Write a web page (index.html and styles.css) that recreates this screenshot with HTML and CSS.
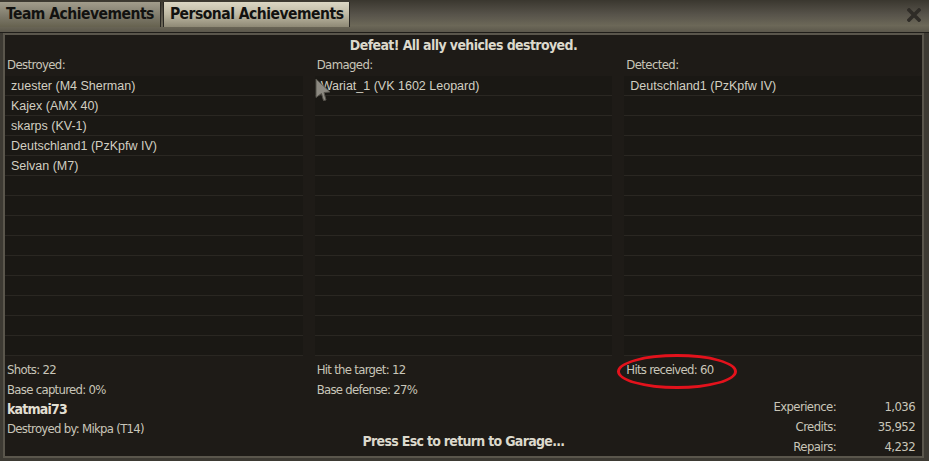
FILE: index.html
```html
<!DOCTYPE html>
<html>
<head>
  <title>Battle Results</title>
  <meta name="viewport" content="width=device-width, initial-scale=1.0">
  <link rel="stylesheet" href="styles.css">
</head>
<body>
  <div class="window">
    <div class="header">
      <div class="tab">Team Achievements</div>
      <div class="tab tab-active">Personal Achievements</div>
      <svg class="close" width="14" height="14" viewBox="0 0 14 14">
        <path d="M2 2 L12 12 M12 2 L2 12" stroke="#2f2c27" stroke-width="3.6" stroke-linecap="square"/>
      </svg>
    </div>

    <div class="panel">
      <div class="title">Defeat! All ally vehicles destroyed.</div>

      <div class="columns">
        <div class="col">
          <div class="col-head">Destroyed:</div>
          <div class="list">
            <div class="row">zuester (M4 Sherman)</div>
            <div class="row">Kajex (AMX 40)</div>
            <div class="row">skarps (KV-1)</div>
            <div class="row">Deutschland1 (PzKpfw IV)</div>
            <div class="row">Selvan (M7)</div>
            <div class="row"></div><div class="row"></div><div class="row"></div>
            <div class="row"></div><div class="row"></div><div class="row"></div>
            <div class="row"></div><div class="row"></div><div class="row"></div>
          </div>
        </div>
        <div class="col">
          <div class="col-head">Damaged:</div>
          <div class="list">
            <div class="row row-cursor">Wariat_1 (VK 1602 Leopard)
              <svg class="cursor" width="17" height="23" viewBox="0 0 17 23">
                <path d="M1 1 L15 14 L9 14.5 L11 22 L8.5 22.5 L6.5 15.5 L1 19.5 Z" fill="#8d8a82" stroke="#55524b" stroke-width="1"/>
              </svg>
            </div>
            <div class="row"></div><div class="row"></div><div class="row"></div>
            <div class="row"></div><div class="row"></div><div class="row"></div>
            <div class="row"></div><div class="row"></div><div class="row"></div>
            <div class="row"></div><div class="row"></div><div class="row"></div>
            <div class="row"></div>
          </div>
        </div>
        <div class="col">
          <div class="col-head">Detected:</div>
          <div class="list">
            <div class="row">Deutschland1 (PzKpfw IV)</div>
            <div class="row"></div><div class="row"></div><div class="row"></div>
            <div class="row"></div><div class="row"></div><div class="row"></div>
            <div class="row"></div><div class="row"></div><div class="row"></div>
            <div class="row"></div><div class="row"></div><div class="row"></div>
            <div class="row"></div>
          </div>
        </div>
      </div>

      <div class="columns stats">
        <div class="col">
          <div class="stat">Shots: 22</div>
          <div class="stat">Base captured: 0%</div>
          <div class="player">katmai73</div>
          <div class="stat">Destroyed by: Mikpa (T14)</div>
        </div>
        <div class="col">
          <div class="stat">Hit the target: 12</div>
          <div class="stat">Base defense: 27%</div>
          <div class="esc">Press Esc to return to Garage...</div>
        </div>
        <div class="col">
          <div class="stat"><span class="hits">Hits received: 60</span></div>
          <div class="rewards">
            <span class="label">Experience:</span><span class="value">1,036</span>
            <span class="label">Credits:</span><span class="value">35,952</span>
            <span class="label">Repairs:</span><span class="value">4,232</span>
          </div>
        </div>
      </div>
    </div>
  </div>
</body>
</html>
```

FILE: styles.css
```css
body {
  margin: 0;
  background-color: #3b3831;
  font-family: 'DejaVu Sans Condensed', 'Liberation Sans', sans-serif;
  overflow: hidden;
}
.window {
  width: 929px;
  height: 461px;
  background-color: #3d3a33;
}
.header {
  position: relative;
  height: 33px;
  display: flex;
  align-items: flex-start;
  gap: 2px;
  background: linear-gradient(#3a372f, #57534a 45%, #6c6858 80%, #5b574b);
  border-bottom: 1px solid #1f1d19;
  box-sizing: border-box;
}
.tab {
  margin-top: 2px;
  height: 25px;
  line-height: 25px;
  padding: 0 6px;
  font-weight: bold;
  font-size: 15.5px;
  letter-spacing: -0.5px;
  color: #121210;
  background: linear-gradient(#a29d8c, #7e7a6b 55%, #66624f);
  border-right: 1px solid #2a2823;
}
.tab-active {
  padding: 0 6px;
  background: linear-gradient(#dcd7c4, #bdb8a3 50%, #8e8975);
  border-left: 1px solid #2a2823;
}
.close {
  position: absolute;
  right: 8px;
  top: 8px;
}
.panel {
  margin: 0 5px 0 3px;
  height: 421px;
  border: 2px solid #5a564c;
  background-color: #1e1b17;
}
.title {
  height: 20px;
  line-height: 20px;
  text-align: center;
  font-weight: bold;
  font-size: 14px;
  letter-spacing: -0.6px;
  color: #dcd9cc;
}
.columns {
  display: grid;
  grid-template-columns: 1fr 1fr 1fr;
  gap: 12px;
}
.col-head {
  height: 21px;
  line-height: 20px;
  padding-left: 2px;
  font-size: 13px;
  letter-spacing: -0.6px;
  color: #c9c6b9;
}
.list {
  background-color: #1a1814;
}
.row {
  height: 19px;
  line-height: 20px;
  border-bottom: 1px solid #2a2722;
  padding-left: 6px;
  font-family: 'Liberation Sans', sans-serif;
  font-size: 12.5px;
  color: #d2cfc2;
}
.row-cursor {
  position: relative;
}
.cursor {
  position: absolute;
  left: 0;
  top: 2px;
}
.stats {
  padding-top: 4px;
}
.stat {
  height: 20px;
  line-height: 20px;
  padding-left: 2px;
  font-size: 13px;
  letter-spacing: -0.7px;
  color: #c9c6b9;
}
.player {
  height: 19px;
  line-height: 19px;
  padding-left: 2px;
  font-size: 14px;
  font-weight: bold;
  letter-spacing: -0.8px;
  color: #e2dfd2;
}
.esc {
  margin-top: 33px;
  text-align: center;
  font-size: 14px;
  font-weight: bold;
  letter-spacing: -0.7px;
  color: #dcd9cc;
}
.hits {
  position: relative;
}
.hits::after {
  content: "";
  position: absolute;
  left: -9px;
  top: -8px;
  width: 114px;
  height: 29px;
  border: 3px solid #e3121c;
  border-radius: 50%;
}
.rewards {
  margin-top: 17px;
  display: grid;
  grid-template-columns: 1fr 79px;
  padding-right: 7px;
  font-size: 13px;
  letter-spacing: -0.6px;
  line-height: 20px;
  color: #c9c6b9;
  text-align: right;
}
```
